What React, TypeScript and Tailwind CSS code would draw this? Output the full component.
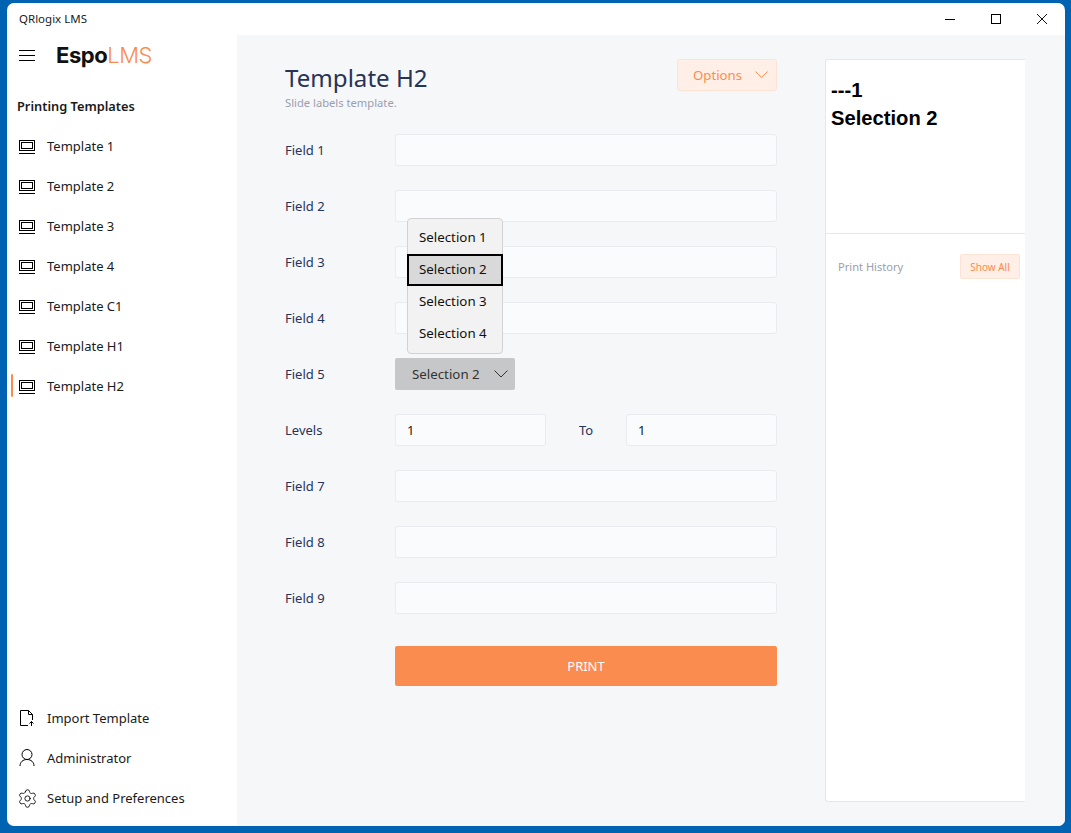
import { Settings } from 'lucide-react'

const font = 'font-["Noto_Sans","Open_Sans",sans-serif]'

const templates = ['Template 1', 'Template 2', 'Template 3', 'Template 4', 'Template C1', 'Template H1', 'Template H2']

function MonitorIcon() {
  return (
    <svg width="16" height="16" viewBox="0 0 16 16" fill="none" stroke="#000" strokeWidth="1">
      <rect x="0.5" y="2.5" width="15" height="10" />
      <rect x="2.5" y="4.5" width="11" height="6" />
      <path d="M0 15.5H16" />
    </svg>
  )
}

function ImportIcon() {
  return (
    <svg width="16" height="18" viewBox="0 0 16 18" fill="none" stroke="#000" strokeWidth="1">
      <path d="M9 16.5H1.5V1.5H9.5L13.5 5.5V11" />
      <path d="M9.5 1.5V5.5H13.5" />
      <path d="M12.5 17V12.5M10.5 14.5L12.5 12.5L14.5 14.5" />
    </svg>
  )
}

function PersonIcon() {
  return (
    <svg width="16" height="18" viewBox="0 0 16 18" fill="none" stroke="#000" strokeWidth="1">
      <circle cx="8" cy="5.5" r="5" />
      <path d="M1 17C1 13 4 10.5 8 10.5C12 10.5 15 13 15 17" />
    </svg>
  )
}

function Chevron({ width = 14 }: { width?: number }) {
  return (
    <svg width={width} height={width / 2 + 1} viewBox="0 0 14 8" fill="none" stroke="currentColor" strokeWidth="1">
      <path d="M0.5 0.5L7 7L13.5 0.5" />
    </svg>
  )
}

function NavItem({ label, icon, active = false }: { label: string; icon: React.ReactNode; active?: boolean }) {
  return (
    <div className="relative flex h-10 items-center pl-3">
      {active && <div className="absolute left-1 top-[8px] h-[23px] w-[2px] rounded-sm bg-[#fb8c4f]" />}
      <div className="flex w-4 justify-center">{icon}</div>
      <span className="ml-3 pt-[2px] text-[13px] text-[#1a1a1a]">{label}</span>
    </div>
  )
}

function TextField() {
  return <div className="h-8 flex-1 rounded-[3px] border border-[#e9ebef] bg-[#fafbfc]" />
}

function FieldRow({ label, children }: { label: string; children?: React.ReactNode }) {
  return (
    <div className="flex h-8 items-center">
      <div className="w-[110px] pt-[2px] text-[13px] text-[#283358]">{label}</div>
      {children ?? <TextField />}
    </div>
  )
}

export default function App() {
  return (
    <div className={`h-[833px] w-[1071px] overflow-hidden bg-[#0063b1] pb-[7px] pl-[7px] pr-[6px] pt-[3px] ${font}`}>
      <div className="flex h-full flex-col overflow-hidden rounded-[7px] bg-white">
        {/* title bar */}
        <div className="flex h-8 flex-none items-center justify-between">
          <span className="pl-3 text-[11.5px] text-[#1a1a1a]">QRlogix LMS</span>
          <div className="flex items-center">
            <div className="flex h-8 w-[46px] items-center justify-center">
              <div className="h-px w-2.5 bg-black" />
            </div>
            <div className="flex h-8 w-[46px] items-center justify-center">
              <div className="h-2.5 w-2.5 border border-black" />
            </div>
            <div className="flex h-8 w-[46px] items-center justify-center">
              <svg width="10" height="10" viewBox="0 0 10 10" stroke="#111" strokeWidth="1">
                <path d="M0 0L10 10M10 0L0 10" />
              </svg>
            </div>
          </div>
        </div>

        <div className="flex min-h-0 flex-1">
          {/* sidebar */}
          <aside className="flex w-[230px] flex-none flex-col pb-[8px]">
            <div className="flex h-10 items-center pl-3">
              <div className="flex w-4 flex-col gap-[4px]">
                <div className="h-px bg-black" />
                <div className="h-px bg-black" />
                <div className="h-px bg-black" />
              </div>
              <div className='ml-[21px] font-["Inter",sans-serif] text-[22px] leading-none tracking-[-0.45px]'>
                <span className="font-bold text-[#111]">Espo</span>
                <span className="font-light text-[#fb8c4f]">LMS</span>
              </div>
            </div>
            <div className="mt-[22px] pl-2.5 text-[12.8px] font-semibold text-[#1a1a1a]">Printing Templates</div>
            <div className="mt-[10px]">
              {templates.map((t) => (
                <NavItem key={t} label={t} icon={<MonitorIcon />} active={t === 'Template H2'} />
              ))}
            </div>
            <div className="mt-auto">
              <NavItem label="Import Template" icon={<ImportIcon />} />
              <NavItem label="Administrator" icon={<PersonIcon />} />
              <NavItem
                label="Setup and Preferences"
                icon={<Settings className="-mx-1 flex-none" size={21} strokeWidth={1} color="#000" />}
              />
            </div>
          </aside>

          {/* main */}
          <main className="flex flex-1 gap-12 bg-[#f6f7f9] pb-6 pl-12 pr-10 pt-6">
            <div className="w-[492px] flex-none">
              <div className="flex items-start justify-between">
                <div>
                  <h1 className="text-[24.1px] leading-[38px] text-[#283358]">Template H2</h1>
                  <p className="text-[11.2px] leading-[12px] text-[#9a9eae]">Slide labels template.</p>
                </div>
                <div className="flex h-8 w-[100px] items-center justify-end gap-[13px] rounded-[3px] border border-[#fde3d3] bg-[#ffefe6] pr-2 text-[13.2px] text-[#fb8c4f]">
                  <span className="pt-[2px]">Options</span>
                  <Chevron width={13} />
                </div>
              </div>

              <div className="relative mt-[25px] flex flex-col gap-6">
                <FieldRow label="Field 1" />
                <FieldRow label="Field 2" />
                <FieldRow label="Field 3" />
                <FieldRow label="Field 4" />
                <FieldRow label="Field 5">
                  <div className="flex h-8 w-[120px] items-center justify-between rounded-[2px] bg-[#c6c7c9] pl-[17px] pr-[7px] text-[13.3px] text-[#333]">
                    <span className="pt-[2px]">Selection 2</span>
                    <Chevron />
                  </div>
                </FieldRow>
                <FieldRow label="Levels">
                  <div className="flex h-8 w-[151px] items-center rounded-[3px] border border-[#e9ebef] bg-[#fafbfc] pl-[11px] pt-[2px] text-[13px] text-[#1a1a1a]">1</div>
                  <div className="w-[80px] pl-[33px] pt-[2px] text-[13px] text-[#283358]">To</div>
                  <div className="flex h-8 w-[151px] items-center rounded-[3px] border border-[#e9ebef] bg-[#fafbfc] pl-[11px] pt-[2px] text-[13px] text-[#1a1a1a]">1</div>
                </FieldRow>
                <FieldRow label="Field 7" />
                <FieldRow label="Field 8" />
                <FieldRow label="Field 9" />
                <div className="ml-[110px] mt-2 flex h-10 items-center justify-center rounded-[2px] bg-[#fb8c4f] pt-[2px] text-[13px] text-white">PRINT</div>

                {/* open dropdown */}
                <div className="absolute left-[122px] top-[84px] flex h-[136px] w-[96px] flex-col rounded-[4px] border border-[#d2d2d2] bg-[#f2f2f2] py-[3px] text-[13.3px] text-[#111]">
                  <div className="flex h-8 flex-none items-center pl-[11px]">Selection 1</div>
                  <div className="-mx-px flex h-8 flex-none items-center border-2 border-black bg-[#d9d9d9] pl-[10px]">Selection 2</div>
                  <div className="flex h-8 flex-none items-center pl-[11px]">Selection 3</div>
                  <div className="flex h-8 flex-none items-center pl-[11px]">Selection 4</div>
                </div>
              </div>
            </div>

            {/* preview */}
            <section className="flex w-[200px] flex-none flex-col rounded-l-[3px] border-y border-l border-[#e6e7ec] bg-white">
              <div className='h-[174px] flex-none border-b border-[#e6e7ec] pl-[5px] pt-[16px] font-["Liberation_Sans",sans-serif] text-[20.2px] font-bold leading-[28px] text-black'>
                <div>---1</div>
                <div>Selection 2</div>
              </div>
              <div className="flex items-center justify-between pl-3 pr-[5px] pt-5">
                <span className="pt-[2px] text-[11.1px] text-[#9a9eae]">Print History</span>
                <div className="flex h-[25px] w-[60px] items-center justify-center rounded-[2px] border border-[#fde3d3] bg-[#ffefe6] pt-[1px] text-[10px] text-[#fb8c4f]">Show All</div>
              </div>
            </section>
          </main>
        </div>
      </div>
    </div>
  )
}
